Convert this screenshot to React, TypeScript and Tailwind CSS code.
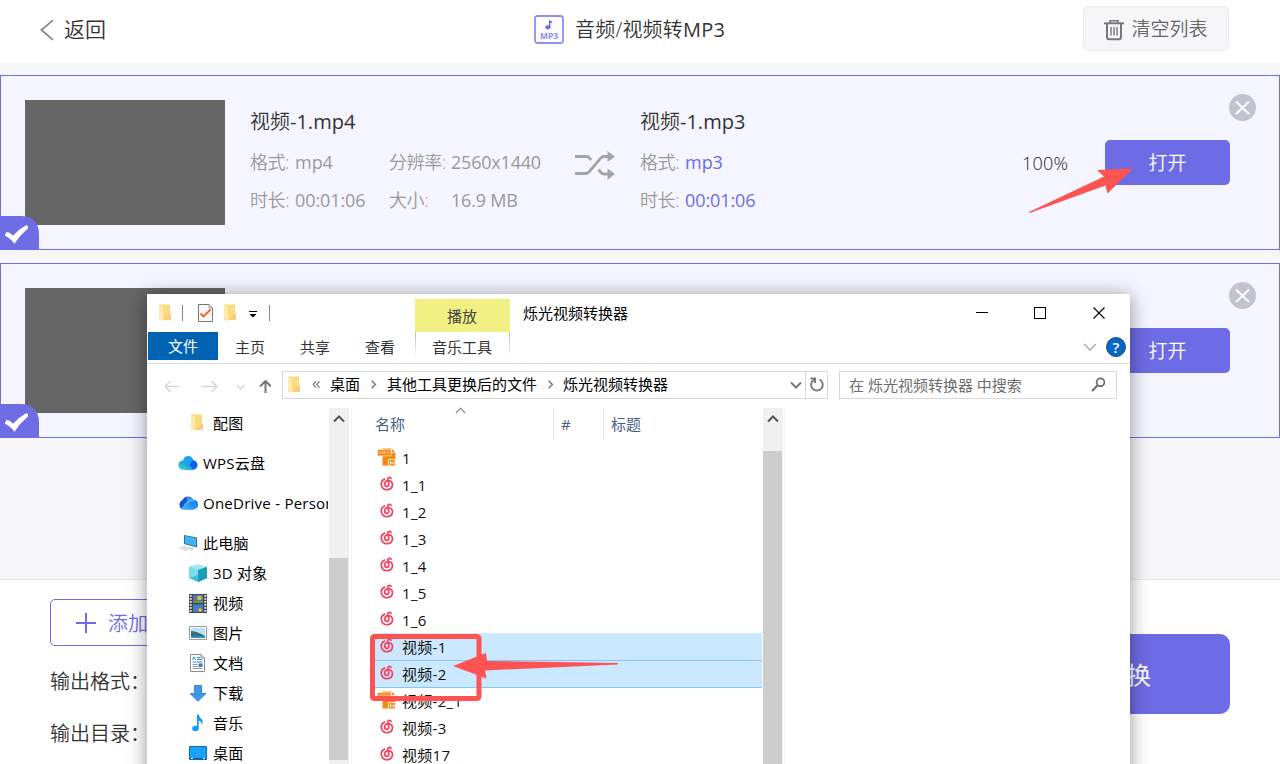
import React from "react";

const APP_FONT = "font-['Open_Sans','Noto_Sans_CJK_SC',sans-serif]";

function FolderIcon({ className = "" }: { className?: string }) {
  return (
    <svg className={`h-[18px] w-[14px] shrink-0 ${className}`} viewBox="0 0 14 18">
      <path d="M1 .5h11v9.500h1v6H1z" fill="#fadb7f" />
      <path d="M12 9.500h1V16H5z" fill="#f5d077" />
      <path d="M1 .5l4 2.500V17.500L1 15.500z" fill="#fdeab0" />
    </svg>
  );
}

function Chevron({ dir, size, color, width = 1.500 }: { dir: "up" | "down" | "right"; size: number; color: string; width?: number }) {
  const paths = { up: "M1 8.500L6 3.500l5 5", down: "M1 3.500l5 5 5-5", right: "M3.500 1l5 5-5 5" };
  return (
    <svg width={size} height={size} viewBox="0 0 12 12" className="shrink-0" fill="none" stroke={color} strokeWidth={width}>
      <path d={paths[dir]} />
    </svg>
  );
}

function Mp3Badge() {
  return (
    <svg className="h-[30px] w-[30px] shrink-0" viewBox="0 0 30 30">
      <rect x="1" y="1" width="28" height="27" rx="2.500" fill="#fcfcff" stroke="#8f90ef" strokeWidth="1.800" />
      <ellipse cx="13.900" cy="12.300" rx="2.600" ry="2.100" fill="#6e6be6" />
      <path d="M15.700 12.300V5.500q.3 1.400 2.300 2" fill="none" stroke="#6e6be6" strokeWidth="1.500" />
      <text x="15" y="23.500" textAnchor="middle" fontFamily="Open Sans" fontWeight="700" fontSize="8.500" fill="#8d8cf0" textLength="18">
        MP3
      </text>
    </svg>
  );
}

function TrashIcon() {
  return (
    <svg className="h-[22px] w-[20px] shrink-0" viewBox="0 0 20 22" fill="none" stroke="#777779">
      <path d="M0 4.300h20" strokeWidth="1.900" />
      <path d="M6 4V1.700h8V4" strokeWidth="1.600" />
      <path d="M3 4.500V18q0 2.200 2.200 2.200h9.600Q17 20.200 17 18V4.500" strokeWidth="2" />
      <path d="M7 8v8.500M10 8v8.500M13 8v8.500" strokeWidth="1.400" />
    </svg>
  );
}

function ShuffleIcon() {
  return (
    <svg className="h-[30px] w-[42px] shrink-0" viewBox="0 0 42 30">
      <g fill="none" stroke="#a3a3a3" strokeWidth="2.800">
        <path d="M0 5.500h11.500q2 0 3.200 1.800l1.300 1.800" />
        <path d="M0 22.500h10.500q2 0 3.600-1.800L25.500 7.300Q27 5.500 29.500 5.500H34" />
        <path d="M23.500 18.500l2.300 2.800q1.400 1.800 3.700 1.800H34" />
      </g>
      <path d="M32.500 0L40 5.700 32.500 11zM32.500 17.500l7.500 5.600-7.500 5.700z" fill="#a3a3a3" />
    </svg>
  );
}

function Field({ label, value, accent }: { label: string; value: string; accent?: boolean }) {
  return (
    <span className="flex gap-[6px]">
      <span className="tracking-[-0.4px]">{label}</span>
      <span className={accent ? "font-normal tracking-[-0.1px] text-[#6e6be6]" : "font-normal tracking-[-0.1px]"}>{value}</span>
    </span>
  );
}

function FileTitle({ name, ext }: { name: string; ext: string }) {
  return (
    <div className="flex h-[43px] items-center text-[20px] text-[#333]">
      {name}
      <span className="font-normal">{ext}</span>
    </div>
  );
}

function TaskDetails({ name, index }: { name: string; index: string }) {
  return (
    <>
      <div className="ml-[25px] w-[325px] shrink-0 text-[18px] text-[#999]">
        <FileTitle name={name} ext={`${index}.mp4`} />
        <div className="flex h-[38px] items-center">
          <div className="w-[139px]">
            <Field label="格式:" value="mp4" />
          </div>
          <span className="w-[62px] tracking-[-0.4px]">分辨率:</span>
          <span className="font-normal tracking-[-0.2px]">2560x1440</span>
        </div>
        <div className="flex h-[38px] items-center">
          <div className="w-[139px]">
            <Field label="时长:" value="00:01:06" />
          </div>
          <span className="w-[62px] tracking-[-0.4px]">大小:</span>
          <span className="font-normal tracking-[-0.2px]">16.9 MB</span>
        </div>
      </div>
      <div className="flex w-[65px] shrink-0 items-start pt-[51px]">
        <ShuffleIcon />
      </div>
      <div className="w-[382px] shrink-0 text-[18px] text-[#999]">
        <FileTitle name={name} ext={`${index}.mp3`} />
        <div className="flex h-[38px] items-center">
          <Field label="格式:" value="mp3" accent />
        </div>
        <div className="flex h-[38px] items-center">
          <Field label="时长:" value="00:01:06" accent />
        </div>
      </div>
      <span className="mt-[54px] text-[18px] tracking-[0.2px] text-[#222]">100%</span>
    </>
  );
}

function TaskCard({ name, index }: { name?: string; index?: string }) {
  return (
    <section className="relative flex h-[175px] w-full shrink-0 border border-[#716ee6] bg-[#f5f5ff] pt-6 pr-[49px] pl-6">
      <div className="h-[125px] w-[200px] shrink-0 bg-[#666]" />
      {name && index && <TaskDetails name={name} index={index} />}
      <button className="mt-[40px] ml-auto h-[45px] w-[125px] rounded-[5px] bg-[#6e6be6] pt-[2px] text-[19px] text-white">打开</button>
      <svg className="absolute top-[18px] right-[23px] h-[27px] w-[27px]" viewBox="0 0 27 27">
        <circle cx="13.500" cy="13.500" r="13.500" fill="#c2c3ce" />
        <path d="M7 7.500l13 12.500M20 7.500L7 20" stroke="#fff" strokeWidth="1.900" />
      </svg>
      <svg className="absolute bottom-[-1px] left-[-1px] h-[34px] w-[39px]" viewBox="0 0 39 34">
        <path d="M0 0h22q17 1 17 19v15H0z" fill="#6f6de6" />
        <path d="M5 18.500l2-2.700q3.500 1 6 4Q19 13 26.500 9l1.500 1.500v2Q20 19 14.500 27.700q-4-5.500-9.500-8z" fill="#fff" />
      </svg>
    </section>
  );
}

function Cloud({ id, one }: { id: string; one?: boolean }) {
  return (
    <svg className="h-[16px] w-[20px] shrink-0" viewBox="0 0 20 16">
      <defs>
        <linearGradient id={id} x1="0" x2="1" y1="1" y2="0">
          <stop offset="0" stopColor={one ? "#39b7fb" : "#35dcc8"} />
          <stop offset="1" stopColor="#1478f0" />
        </linearGradient>
      </defs>
      {one ? (
        <>
          <path d="M5 14.500a5 5 0 0 1-.5-9.300A6 6 0 0 1 15.300 4.500a5 5 0 0 1 0 10z" fill="#2b8df2" />
          <path d="M5 14.500a5 5 0 0 1-.5-9.300Q6 2.500 8.500 2L9 5.500 3 13.500z" fill="#1b4fc4" />
          <path d="M4 13.500L10 5.500q2.500-3 5.300-1l2 1.500q-5-.5-7.500 2.500L5.500 14.500z" fill="#4db2ff" />
          <path d="M5 14.500L10 9q3-3.500 8.500-2A5 5 0 0 1 15 14.500z" fill={`url(#${id})`} />
        </>
      ) : (
        <>
          <path d="M5 6Q6 1 10.300 1t5.200 5L13 11H6z" fill="#19a5f7" />
          <path d="M14.500 5.300a4.700 4.700 0 0 1 .5 9.500H8z" fill="#0762ea" />
          <path d="M5 14.800a4.700 4.700 0 1 1 4-7.300l4 4.500q1.500 2 3 2.700z" fill={`url(#${id})`} />
        </>
      )}
    </svg>
  );
}

function PcIcon() {
  return (
    <svg className="h-[18px] w-[20px] shrink-0" viewBox="0 0 20 18">
      <path d="M6 1l13 2.500v10L6 10z" fill="#2f6f96" />
      <path d="M7 2l11 2.200v8L7 9.200z" fill="#42b4f5" />
      <path d="M0 14l6-2 7 2.500L7 17z" fill="#d0d5d8" />
      <path d="M2 14l4.500 1.800M4 13.300l5 1.900" stroke="#f4f6f7" strokeWidth=".7" />
      <path d="M11 13.500l4 1.500-3 1.500" fill="none" stroke="#b8c0c5" />
    </svg>
  );
}

function CubeIcon() {
  return (
    <svg className="h-[18px] w-[18px] shrink-0" viewBox="0 0 18 18">
      <path d="M0 3l9-2.500L18 3v11l-9 4-9-4z" fill="#3bc2d8" />
      <path d="M0 3l9-2.500L18 3 9 6z" fill="#a5eaf3" />
      <path d="M9 6l9-3v11l-9 4z" fill="#1c9db8" />
      <path d="M0 3l9 3v5L0 14z" fill="#7bdcec" />
    </svg>
  );
}

function FilmIcon() {
  return (
    <svg className="h-[19px] w-[18px] shrink-0" viewBox="0 0 18 19">
      <path d="M0 0h18v19H0z" fill="#454545" />
      <path d="M1.700 1v18M16.300 1v18" stroke="#e8e8e8" strokeWidth="2" strokeDasharray="1.700 1.300" />
      <path d="M4 1h10v8H4zM4 10.500h10V18H4z" fill="#3f80cf" />
      <circle cx="10.500" cy="4" r="2.300" fill="#e6c02d" />
      <path d="M5 5h3v2.500H5zM9 15.500h3V18H9z" fill="#d9472f" />
      <path d="M4 8q4-2 10 0v1H4z" fill="#54a842" />
      <circle cx="11" cy="16" r="1.800" fill="#e5c22c" />
    </svg>
  );
}

function PhotoIcon() {
  return (
    <svg className="h-[14px] w-[18px] shrink-0" viewBox="0 0 18 14">
      <path d="M.5.500h17v13H.5z" fill="#fff" stroke="#9b9b9b" />
      <path d="M2 2h14v10H2z" fill="#b9e1f7" />
      <path d="M2 5q5 0 14 5v2H2z" fill="#356f77" />
      <path d="M2 10h14v2H2z" fill="#3c89c6" />
    </svg>
  );
}

function DocIcon() {
  return (
    <svg className="h-[18px] w-[15px] shrink-0" viewBox="0 0 15 18">
      <path d="M.5.500H11L14.500 4v13.500H.5z" fill="#fff" stroke="#8c8c8c" />
      <path d="M11 .5V4h3.500" fill="none" stroke="#8c8c8c" />
      <path d="M2.500 6l1.500-3 1.500 3M7 3.500h3M7 5.500h5M2.500 8h10" stroke="#2d8ed6" fill="none" />
      <path d="M2.500 10.500h5M2.500 12.500h5M2.500 14.500h10" stroke="#8f9ba5" />
      <path d="M8.500 9.500h4V13h-4z" fill="#447f9e" />
    </svg>
  );
}

function DownloadIcon() {
  return (
    <svg className="h-[17px] w-[18px] shrink-0" viewBox="0 0 18 17">
      <path d="M5.500.5h7v8h4.500L9 16.300 1 8.500h4.500z" fill="#3b97ea" stroke="#2e78bd" strokeWidth=".8" />
    </svg>
  );
}

function NoteIcon() {
  return (
    <svg className="h-[18px] w-[18px] shrink-0" viewBox="0 0 18 18">
      <ellipse cx="6.500" cy="14.500" rx="3.300" ry="2.800" fill="#109cf0" />
      <path d="M8 .5h1.700q.4 2.500 2.500 4.200 2.600 2.400.5 6.300.3-3.500-3-4.500v8H8z" fill="#109cf0" />
    </svg>
  );
}

function DesktopIcon() {
  return (
    <svg className="h-[14px] w-[18px] shrink-0" viewBox="0 0 18 14">
      <path d="M.5.500h17v13H.5z" fill="#1ba1fb" stroke="#17699f" />
      <path d="M1 12.500h16" stroke="#0b5e9c" />
      <path d="M2 12.500h2M14 12.500h2" stroke="#fff" />
    </svg>
  );
}

function MpvIcon() {
  return (
    <svg className="mb-[2px] ml-[-1px] h-[18px] w-[20px] shrink-0" viewBox="0 0 20 18">
      <path d="M5.500.5H14.500l4 4V17.500H5.500z" fill="#fb860f" />
      <path d="M14.500.5v4h4" fill="none" stroke="#fff" strokeWidth=".8" />
      <rect x=".4" y="1.600" width="13.600" height="6.300" rx="1" fill="#fb860f" stroke="#fff" strokeWidth=".6" />
      <path d="M2.500 6V3.700l1.300 1.300L5 3.700V6M6.800 6V3.700h1.500V5H6.800M10.500 3.700v2.300l1.700-1.200z" fill="none" stroke="#ffd9a8" strokeWidth=".7" />
      <path d="M11.500 17v-5.500h7V17M13.500 16.500v-3l1.700 2 1.800-2v3" fill="none" stroke="#fff" strokeWidth=".9" />
    </svg>
  );
}

function CloudMusicIcon() {
  return (
    <svg className="mb-[3px] ml-[2px] h-[15px] w-[14px] shrink-0" viewBox="0 0 24 25" fill="none" stroke="#f5415f" strokeWidth="2.900" strokeLinecap="round">
      <path d="M8 4.800A9.600 9.600 0 1 0 21.500 14q-.5-5-5.500-6.300-7.500-1-8 5.300 0 4.200 3.700 4.400 3.800-.2 3.300-4.400L13.600 5.500q-.3-3.800 2.900-3.500 1.600.3 2.400 1.500" />
    </svg>
  );
}

type TreeEntry = { label: string; icon: React.ReactNode; root?: boolean; tall?: boolean };

const tree: TreeEntry[] = [
  { label: "配图", icon: <FolderIcon className="mr-[2px]" /> },
  { label: "WPS云盘", icon: <Cloud id="wps" />, root: true, tall: true },
  { label: "OneDrive - Person", icon: <Cloud id="onedrive" one />, root: true, tall: true },
  { label: "此电脑", icon: <PcIcon />, root: true, tall: true },
  { label: "3D 对象", icon: <CubeIcon /> },
  { label: "视频", icon: <FilmIcon /> },
  { label: "图片", icon: <PhotoIcon /> },
  { label: "文档", icon: <DocIcon /> },
  { label: "下载", icon: <DownloadIcon /> },
  { label: "音乐", icon: <NoteIcon /> },
  { label: "桌面", icon: <DesktopIcon /> },
];

type FileEntry = { name: string; video?: boolean; selected?: boolean; afterSelected?: boolean };

const files: FileEntry[] = [
  { name: "1", video: true },
  { name: "1_1" },
  { name: "1_2" },
  { name: "1_3" },
  { name: "1_4" },
  { name: "1_5" },
  { name: "1_6" },
  { name: "视频-1", selected: true },
  { name: "视频-2", selected: true, afterSelected: true },
  { name: "视频-2_1", video: true, afterSelected: true },
  { name: "视频-3" },
  { name: "视频17" },
];

function ExplorerTitleBar() {
  return (
    <div className="flex h-[38px] shrink-0 items-center pl-[11px]">
      <FolderIcon />
      <span className="ml-[10px] h-4 w-px bg-[#888]" />
      <svg className="ml-[15px] h-[18px] w-[15px]" viewBox="0 0 15 18">
        <path d="M.5.500H11L14.500 4v13.500H.5z" fill="#f8f8f8" stroke="#777" />
        <path d="M11 .5V4h3.500" fill="none" stroke="#999" />
        <path d="M2.500 9.500l3 3 7-7" fill="none" stroke="#f0641e" strokeWidth="1.800" />
      </svg>
      <FolderIcon className="ml-[10px]" />
      <svg className="mt-[2px] ml-[12px] h-[7px] w-[8px]" viewBox="0 0 8 7">
        <path d="M0 .5h8" stroke="#000" />
        <path d="M.5 3h7L4 6.500z" />
      </svg>
      <span className="ml-[12px] h-4 w-px bg-[#888]" />
      <span className="mt-[5px] ml-[145px] flex h-[33px] w-[95px] items-center justify-center bg-[#f0f083] pr-px text-[#444]">播放</span>
      <span className="ml-[13px] text-black">烁光视频转换器</span>
      <div className="ml-auto flex items-center pr-[25px]">
        <span className="mb-[2px] h-px w-[12px] bg-black" />
        <span className="mb-px ml-[46px] h-[12px] w-[12px] border border-black" />
        <svg className="ml-[47px] h-[12px] w-[12px]" viewBox="0 0 12 12">
          <path d="M.5.500l11 11M11.500.5l-11 11" stroke="#000" strokeWidth="1.100" />
        </svg>
      </div>
    </div>
  );
}

function ExplorerTabs() {
  return (
    <div className="flex h-[32px] shrink-0 items-start border-b border-[#dadada] pl-px text-[#333]">
      <span className="flex h-[28px] w-[70px] items-center justify-center bg-[#0063b1] text-white">文件</span>
      <span className="flex h-[30px] w-[64px] items-center justify-center">主页</span>
      <span className="flex h-[30px] w-[66px] items-center justify-center">共享</span>
      <span className="flex h-[30px] w-[64px] items-center justify-center">查看</span>
      <span className="ml-[3px] flex h-[25px] w-px bg-linear-to-b from-[#bbb] to-white" />
      <span className="flex h-[30px] w-[93px] items-center justify-center pr-px">音乐工具</span>
      <span className="h-[25px] w-px bg-linear-to-b from-[#bbb] to-white" />
      <div className="ml-auto flex h-[30px] items-center gap-[9px] pr-[4px]">
        <Chevron dir="down" size={14} color="#aaa" width={1.2} />
        <span className="flex h-[20px] w-[20px] items-center justify-center rounded-full border border-[#1b4f88] bg-[#0668c6] text-[15px] font-semibold text-white">
          ?
        </span>
      </div>
    </div>
  );
}

function AddressRow() {
  return (
    <div className="flex h-[43px] shrink-0 items-center pb-[2px] pl-[17px]">
      <svg className="mt-[3px] h-[13px] w-[107px]" viewBox="0 0 107 13" fill="none">
        <g stroke="#d5d5d5" strokeWidth="1.500">
          <path d="M15 6.500H1M6.500 1L1 6.500 6.500 12" />
          <path d="M38 6.500h15M47.500 1l5.500 5.500L47.500 12" />
          <path d="M72.500 5l4 4 4-4" />
        </g>
        <path d="M101.500 13V1M96 6.500l5.500-5.500 5.500 5.500" stroke="#757575" strokeWidth="2" />
      </svg>
      <div className="ml-[11px] flex h-[28px] w-[546px] items-center border border-[#d9d9d9] pl-[4px] text-black">
        <FolderIcon />
        <svg className="ml-[11px] h-[7px] w-[9px]" viewBox="0 0 9 8" fill="none" stroke="#666" strokeWidth="1.200">
          <path d="M4 .5L.8 4 4 7.500M8 .5L4.800 4 8 7.500" />
        </svg>
        <span className="mr-[9px] ml-[9px] pb-[2px]">桌面</span>
        <Chevron dir="right" size={9} color="#777" width={2} />
        <span className="mr-[9px] ml-[9px] pb-[2px]">其他工具更换后的文件</span>
        <Chevron dir="right" size={9} color="#777" width={2} />
        <span className="ml-[8px] pb-[2px]">烁光视频转换器</span>
        <div className="ml-auto flex h-full items-center">
          <Chevron dir="down" size={12} color="#777" width={2} />
          <span className="ml-[3px] h-full w-px bg-[#d9d9d9]" />
          <svg className="mx-[3.500px] h-[15px] w-[14px]" viewBox="0 0 14 15" fill="none" stroke="#777" strokeWidth="1.900">
            <path d="M9.500 2.500a5.800 5.800 0 1 1-5.500.2" />
            <path d="M.5 1.500h4.500V6" />
          </svg>
        </div>
      </div>
      <div className="ml-[11px] flex h-[28px] w-[278px] items-center border border-[#d9d9d9] pl-[9px] text-[#6d6d6d]">
        在 烁光视频转换器 中搜索
        <svg className="mr-[10px] ml-auto h-[15px] w-[15px]" viewBox="0 0 15 15" fill="none" stroke="#6b6b6b">
          <circle cx="9.500" cy="5.300" r="3.900" strokeWidth="1.800" />
          <path d="M6.500 8.500L1 14" strokeWidth="2.200" />
        </svg>
      </div>
    </div>
  );
}

function TreePane() {
  return (
    <div className="w-[181px] shrink-0 overflow-hidden text-black">
      {tree.map((t) => (
        <div key={t.label} className={t.tall ? "pt-[10px]" : ""}>
          <div className={t.root ? "flex h-[30px] items-center pl-[31px]" : "flex h-[30px] items-center pl-[41px]"}>
            <span className={t.root ? "flex w-[25px] shrink-0" : "flex w-[25px] shrink-0 pr-[6px]"}>
              <span className={t.root ? "" : "flex w-[19px] justify-center"}>{t.icon}</span>
            </span>
            <span className="tracking-[0.25px] whitespace-nowrap">{t.label}</span>
          </div>
        </div>
      ))}
    </div>
  );
}

function FileRow({ name, video, selected, afterSelected }: FileEntry) {
  return (
    <div
      className={`flex h-[27px] items-center border-t pl-[3px] ${selected ? "bg-[#cce8ff]" : ""} ${
        afterSelected ? "border-[#84c6fb]" : selected ? "border-[#cce8ff]" : "border-transparent"
      }`}
    >
      <span className="flex w-[24px] shrink-0 items-center">{video ? <MpvIcon /> : <CloudMusicIcon />}</span>
      <span className="tracking-[0.3px] whitespace-nowrap text-[#111]">{name}</span>
    </div>
  );
}

function Explorer() {
  return (
    <div className="absolute top-[294px] left-[147px] flex h-[490px] w-[983px] flex-col bg-white text-[15px] leading-[20px] shadow-[0_2px_18px_rgba(0,0,0,0.42)]">
      <ExplorerTitleBar />
      <ExplorerTabs />
      <AddressRow />
      <div className="flex min-h-0 flex-1 overflow-hidden pt-px">
        <TreePane />
        <div className="ml-px flex w-[20px] shrink-0 flex-col bg-[#f0f0f0] pt-[5px]">
          <span className="flex w-[19px] justify-center">
            <Chevron dir="up" size={12} color="#555" width={2} />
          </span>
          <div className="mt-[133px] h-[202px] w-[19px] bg-[#cdcdcd]" />
        </div>
        <div className="ml-[2px] w-px shrink-0 bg-[#f3f3f3]" />
        <div className="relative mr-px ml-[23px] w-[387px] shrink-0">
          <div className="flex h-[32px] items-center text-[#44608a]">
            <span className="w-[178px]">名称</span>
            <span className="h-full w-px bg-[#e5e5e5]" />
            <span className="w-[49px] pl-[7px]">#</span>
            <span className="h-full w-px bg-[#e5e5e5]" />
            <span className="pl-[7px]">标题</span>
          </div>
          <div className="absolute top-[-3px] left-[80px]">
            <Chevron dir="up" size={11} color="#777" width={1.2} />
          </div>
          <div className="pt-[4px]">
            {files.map((f) => (
              <FileRow key={f.name} {...f} />
            ))}
          </div>
        </div>
        <div className="flex w-[20px] shrink-0 flex-col bg-[#f0f0f0] pt-[5px]">
          <span className="flex w-[19px] justify-center">
            <Chevron dir="up" size={12} color="#555" width={2} />
          </span>
          <div className="mt-[26px] w-[19px] flex-1 bg-[#cdcdcd]" />
        </div>
        <div className="ml-px w-px bg-[#f3f3f3]" />
      </div>
    </div>
  );
}

export default function App() {
  return (
    <div className={`relative flex h-[764px] w-[1280px] flex-col overflow-hidden bg-[#f6f6f8] leading-none font-[350] ${APP_FONT}`}>
      <header className="flex h-[63px] shrink-0 items-center bg-white pb-[4px] pl-[39px] text-[20px] text-[#333]">
        <svg className="h-[24px] w-[15px]" viewBox="0 0 16 24" fill="none" stroke="#888" strokeWidth="1.900">
          <path d="M15 1.500L2.500 12 15 22.500" />
        </svg>
        <span className="ml-[10px] w-[470px] text-[21px]">返回</span>
        <Mp3Badge />
        <span className="ml-[11px] pt-px tracking-[0.2px]">
          音频/视频转<span className="font-normal">MP3</span>
        </span>
        <button className="mr-[51px] mb-[2px] ml-auto flex h-[45px] w-[146px] items-center justify-center gap-[7px] rounded-[5px] border border-[#ebebed] bg-[#f6f6f8] pt-[2px] text-[19px] text-[#666]">
          <TrashIcon />
          清空列表
        </button>
      </header>

      <main className="flex h-[516px] shrink-0 flex-col gap-[13px] pt-[12px]">
        <TaskCard name="视频" index="-1" />
        <TaskCard />
      </main>

      <footer className="flex flex-1 justify-between border-t border-[#e8e8ea] bg-white pr-[50px] pl-[50px] text-[20px] text-[#333]">
        <div>
          <button className="mt-[19px] flex h-[47px] w-[160px] items-center rounded-[5px] border border-[#6e6be6] pt-[2px] pl-[25px] text-[#6e6be6]">
            <svg className="mr-[12px] mb-[2px] h-[20px] w-[20px]" viewBox="0 0 20 20" stroke="#6e6be6" strokeWidth="2">
              <path d="M0 10h20M10 0v20" />
            </svg>
            添加
          </button>
          <p className="mt-[26px]">输出格式：</p>
          <p className="mt-[32px]">输出目录：</p>
        </div>
        <button className="mt-[54px] h-[80px] w-[250px] rounded-[10px] bg-[#6e6be6] pt-px pr-[79px] text-right text-[24px] font-normal text-white">
          换
        </button>
      </footer>

      <div className="font-normal">
        <Explorer />
      </div>

      <svg className="absolute top-0 left-0 h-[764px] w-[1280px]" viewBox="0 0 1280 764" fill="#fd5352">
        <path d="M1029 212L1104 176.500 1097 170 1133 168.500 1107.500 193.500 1105.500 185.500 1029.500 213z" />
        <path d="M618 663L487 661 486 653 453 666 486.500 678.500 485 670.500 618 664.500z" />
        <rect x="372.500" y="636.500" width="106.500" height="62" rx="2" fill="none" stroke="#fd5352" strokeWidth="5" />
      </svg>
    </div>
  );
}
